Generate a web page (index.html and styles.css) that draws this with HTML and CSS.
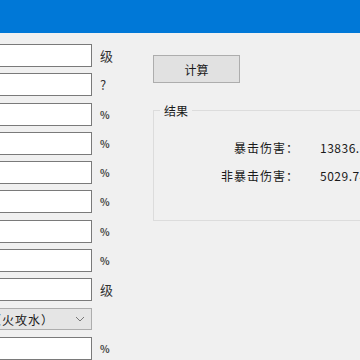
FILE: index.html
```html
<!DOCTYPE html>
<html lang="zh-CN">
<head>
    <meta charset="UTF-8">
    <meta name="viewport" content="width=device-width, initial-scale=1.0">
    <link rel="stylesheet" href="styles.css">
    <title>伤害计算</title>
</head>
<body>
    <div class="titlebar"></div>
    <div class="window">
        <div class="fields">
            <div class="row"><input type="text" class="box"><span class="unit">级</span></div>
            <div class="row"><input type="text" class="box"><span class="unit">?</span></div>
            <div class="row"><input type="text" class="box"><span class="unit small">%</span></div>
            <div class="row"><input type="text" class="box"><span class="unit small">%</span></div>
            <div class="row"><input type="text" class="box"><span class="unit small">%</span></div>
            <div class="row"><input type="text" class="box"><span class="unit small">%</span></div>
            <div class="row"><input type="text" class="box"><span class="unit small">%</span></div>
            <div class="row"><input type="text" class="box"><span class="unit small">%</span></div>
            <div class="row"><input type="text" class="box"><span class="unit">级</span></div>
            <div class="row">
                <div class="combo">
                    <span class="combo-text">蒸发（火攻水）</span>
                    <svg class="chevron" width="10" height="6" viewBox="0 0 10 6">
                        <path d="M1 1 L5 5 L9 1" fill="none" stroke="#777" stroke-width="1"/>
                    </svg>
                </div>
            </div>
            <div class="row"><input type="text" class="box"><span class="unit small">%</span></div>
        </div>
        <div class="side">
            <button class="calc">计算</button>
            <fieldset class="result">
                <legend>结果</legend>
                <div class="result-grid">
                    <span class="label">暴击伤害：</span><span class="value">13836.52</span>
                    <span class="label">非暴击伤害：</span><span class="value">5029.74</span>
                </div>
            </fieldset>
        </div>
    </div>
</body>
</html>
```

FILE: styles.css
```css
body {
    margin: 0;
    background-color: #f0f0f0;
    font-family: "Noto Sans CJK SC", "Microsoft YaHei", sans-serif;
    font-size: 12px;
    color: #1a1a1a;
    overflow: hidden;
    height: 360px;
}

.titlebar {
    height: 33px;
    background-color: #0078d7;
}

.window {
    display: flex;
    padding-top: 11px;
}

.fields {
    display: flex;
    flex-direction: column;
    gap: 6.3px;
    margin-left: -40px;
    flex-shrink: 0;
}

.row {
    display: flex;
    align-items: center;
    height: 23px;
}

.box {
    box-sizing: border-box;
    width: 132px;
    height: 23px;
    margin: 0;
    border: 1px solid #7a7a7a;
    background-color: #fff;
    padding: 0 4px;
}

.unit {
    margin-left: 8px;
    font-size: 13px;
    color: #333;
}

.unit.small {
    font-size: 10px;
    font-weight: bold;
    color: #444;
}

.combo {
    box-sizing: border-box;
    width: 132px;
    height: 22px;
    border: 1px solid #adadad;
    background-color: #e5e5e5;
    display: flex;
    align-items: center;
    justify-content: space-between;
    padding: 0 6px 0 2px;
    font-size: 12px;
    white-space: nowrap;
}

.combo-text {
    letter-spacing: 1px;
}

.side {
    margin-left: 40px;
    flex-shrink: 0;
}

.calc {
    box-sizing: border-box;
    width: 87px;
    height: 28px;
    margin-top: 11px;
    border: 1px solid #adadad;
    background-color: #e1e1e1;
    font-family: inherit;
    font-size: 12px;
    color: #1a1a1a;
    padding: 0;
}

.result {
    box-sizing: border-box;
    width: 240px;
    height: 119px;
    margin: 19px 0 0 0;
    padding: 0;
    border: 1px solid #dcdcdc;
}

.result legend {
    margin-left: 6px;
    padding: 0 4px;
    font-size: 12px;
}

.result-grid {
    display: grid;
    grid-template-columns: 145px auto;
    row-gap: 11px;
    column-gap: 21px;
    margin-top: 20px;
    white-space: nowrap;
}

.label {
    text-align: right;
    letter-spacing: 1px;
}

.value {
    letter-spacing: 0.5px;
}
```
